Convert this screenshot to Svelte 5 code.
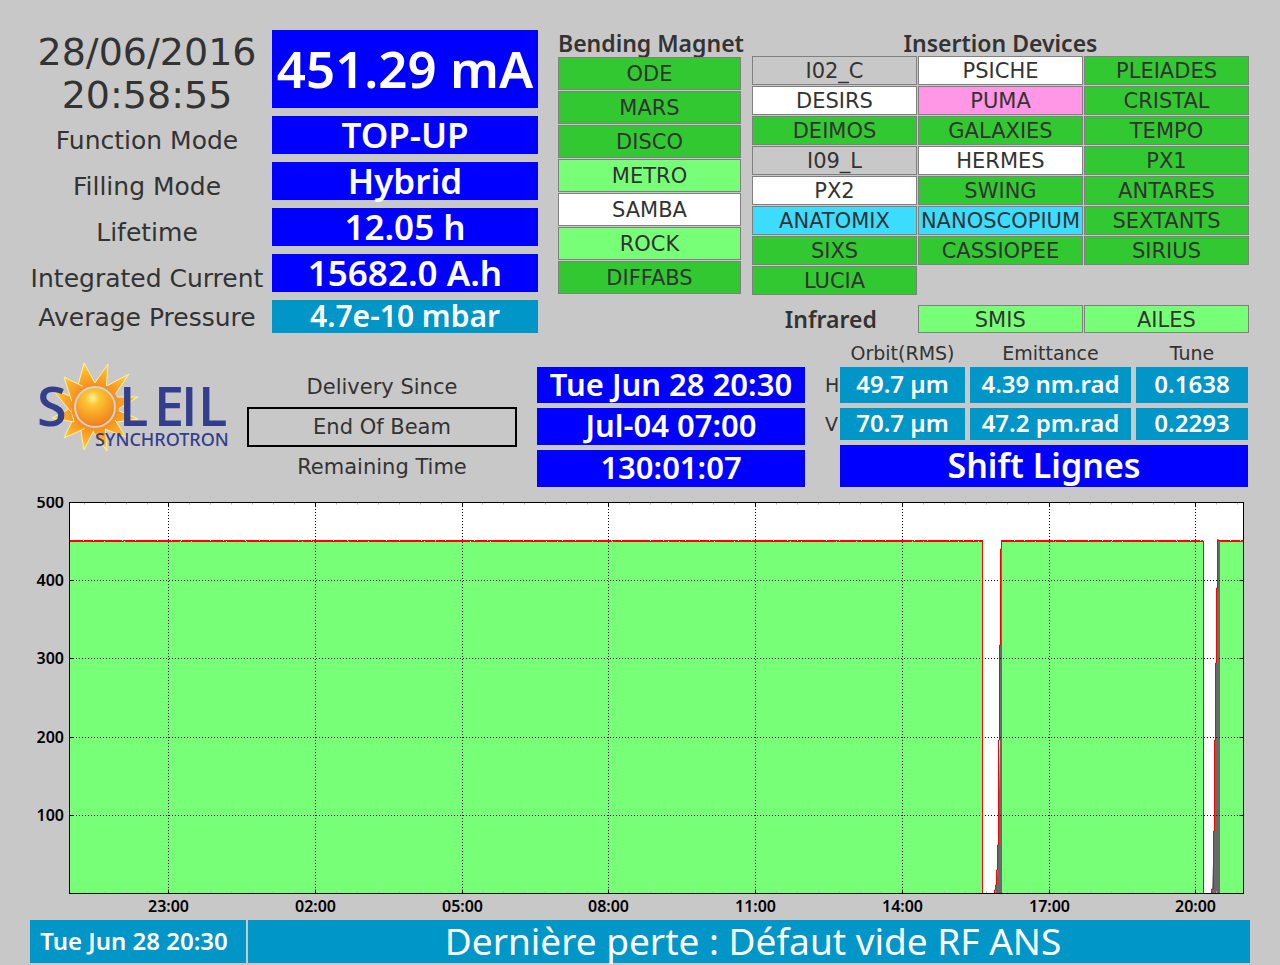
<!--
  Machine status board for the storage ring
  Beam values, beamline front-end states, orbit figures and the 24 h current trend
-->
<script lang="ts">
  type State = 'open' | 'ready' | 'closed' | 'off' | 'busy' | 'test';

  interface Beamline {
    name: string;
    state: State;
  }

  const machine = [
    { label: 'Function Mode', value: 'TOP-UP' },
    { label: 'Filling Mode', value: 'Hybrid' },
    { label: 'Lifetime', value: '12.05 h' },
    { label: 'Integrated Current', value: '15682.0 A.h' }
  ];

  const bending: Beamline[] = [
    { name: 'ODE', state: 'open' },
    { name: 'MARS', state: 'open' },
    { name: 'DISCO', state: 'open' },
    { name: 'METRO', state: 'ready' },
    { name: 'SAMBA', state: 'closed' },
    { name: 'ROCK', state: 'ready' },
    { name: 'DIFFABS', state: 'open' }
  ];

  // Row by row, three per row
  const insertion: Beamline[] = [
    { name: 'I02_C', state: 'off' },
    { name: 'PSICHE', state: 'closed' },
    { name: 'PLEIADES', state: 'open' },
    { name: 'DESIRS', state: 'closed' },
    { name: 'PUMA', state: 'test' },
    { name: 'CRISTAL', state: 'open' },
    { name: 'DEIMOS', state: 'open' },
    { name: 'GALAXIES', state: 'open' },
    { name: 'TEMPO', state: 'open' },
    { name: 'I09_L', state: 'off' },
    { name: 'HERMES', state: 'closed' },
    { name: 'PX1', state: 'open' },
    { name: 'PX2', state: 'closed' },
    { name: 'SWING', state: 'open' },
    { name: 'ANTARES', state: 'open' },
    { name: 'ANATOMIX', state: 'busy' },
    { name: 'NANOSCOPIUM', state: 'busy' },
    { name: 'SEXTANTS', state: 'open' },
    { name: 'SIXS', state: 'open' },
    { name: 'CASSIOPEE', state: 'open' },
    { name: 'SIRIUS', state: 'open' },
    { name: 'LUCIA', state: 'open' }
  ];

  const infrared: Beamline[] = [
    { name: 'SMIS', state: 'ready' },
    { name: 'AILES', state: 'ready' }
  ];

  const orbit = [
    { axis: 'H', values: ['49.7 µm', '4.39 nm.rad', '0.1638'] },
    { axis: 'V', values: ['70.7 µm', '47.2 pm.rad', '0.2293'] }
  ];

  // Chart geometry, in viewBox units
  const left = 39.5;
  const right = 1213.5;
  const top = 5.5;
  const bottom = 396.5;
  const hourStep = 146.75;
  const firstHour = 138.5;

  const yTicks = [500, 400, 300, 200, 100].map((value) => ({
    value,
    y: Math.floor(bottom - (value * (bottom - top)) / 500) + 0.5
  }));

  const xTicks = ['23:00', '02:00', '05:00', '08:00', '11:00', '14:00', '17:00', '20:00'].map(
    (label, i) => ({ label, x: Math.floor(firstHour + i * hourStep) + 0.5 })
  );

  const minorTicks = Array.from({ length: 56 }, (_, i) =>
    Math.floor(firstHour + (i - 4) * (hourStep / 7)) + 0.5
  ).filter((x) => x > left && x < right && !xTicks.some((t) => Math.abs(t.x - x) < 3));

  const rays = [
    'M54 12L47 38L66 34Z',
    'M78 13L62 36L76 40Z',
    'M99 23L73 37L82 48Z',
    'M108 46L80 46L85 60Z',
    'M108 68L85 58L80 72Z',
    'M96 86L83 66L72 77Z',
    'M77 100L75 74L61 78Z',
    'M54 99L65 77L50 74Z',
    'M34 87L56 77L44 66Z',
    'M22 67L44 71L41 57Z',
    'M22 38L41 61L45 47Z',
    'M34 26L42 51L56 37Z'
  ];
</script>

{#snippet tile(line: Beamline)}
  <li class="tile {line.state}">{line.name}</li>
{/snippet}

<main class="board">
  <section class="top">
    <dl class="machine">
      <dt class="clock"><time datetime="2016-06-28T20:58:55">28/06/2016<br />20:58:55</time></dt>
      <dd class="value current">451.29 mA</dd>
      {#each machine as item}
        <dt>{item.label}</dt>
        <dd class="value">{item.value}</dd>
      {/each}
      <dt class="low">Average Pressure</dt>
      <dd class="value teal pressure">4.7e-10 mbar</dd>
    </dl>

    <div class="bending">
      <h2>Bending Magnet</h2>
      <ul class="tall">
        {#each bending as line}
          {@render tile(line)}
        {/each}
      </ul>
    </div>

    <div class="insertion">
      <h2>Insertion Devices</h2>
      <ul class="three">
        {#each insertion as line}
          {@render tile(line)}
        {/each}
      </ul>
      <div class="infrared">
        <h2>Infrared</h2>
        <ul class="two">
          {#each infrared as line}
            {@render tile(line)}
          {/each}
        </ul>
      </div>
    </div>
  </section>

  <section class="middle">
    <svg class="logo" viewBox="0 0 207 110" role="img" aria-label="SOLEIL Synchrotron">
      <defs>
        <radialGradient id="disc" cx="0.44" cy="0.28" r="0.7">
          <stop offset="0" stop-color="#fff3a0" />
          <stop offset="0.25" stop-color="#fdc534" />
          <stop offset="0.7" stop-color="#f69a22" />
          <stop offset="1" stop-color="#ef7f22" />
        </radialGradient>
        <radialGradient id="ray" gradientUnits="userSpaceOnUse" cx="65" cy="56" r="48">
          <stop offset="0.4" stop-color="#f58a1f" />
          <stop offset="0.75" stop-color="#fbb52a" />
          <stop offset="1" stop-color="#fde56a" />
        </radialGradient>
      </defs>
      <g class="rays">
        {#each rays as d}
          <path {d} />
        {/each}
        <circle class="core" cx="65" cy="56" r="24" />
      </g>
      <circle class="disc" cx="65" cy="56" r="20" />
      <g class="letters">
        <text x="7" y="75">S</text>
        <text x="89" y="75">L</text>
        <text x="124" y="75">E</text>
        <text x="151" y="75">I</text>
        <text x="168" y="75">L</text>
      </g>
      <text class="name" x="65" y="95">SYNCHROTRON</text>
    </svg>

    <div class="delivery-labels">
      <span>Delivery Since</span>
      <button type="button">End Of Beam</button>
      <span>Remaining Time</span>
    </div>

    <div class="delivery">
      <div class="value">Tue Jun 28 20:30</div>
      <div class="value">Jul-04 07:00</div>
      <div class="value">130:01:07</div>
    </div>

    <div class="orbit">
      <table>
        <thead>
          <tr>
            <td></td>
            <th scope="col">Orbit(RMS)</th>
            <th scope="col">Emittance</th>
            <th scope="col">Tune</th>
          </tr>
        </thead>
        <tbody>
          {#each orbit as row}
            <tr>
              <th scope="row">{row.axis}</th>
              {#each row.values as value}
                <td class="value teal">{value}</td>
              {/each}
            </tr>
          {/each}
        </tbody>
      </table>
      <div class="value shift">Shift Lignes</div>
    </div>
  </section>

  <svg class="chart" viewBox="0 0 1220 423" role="img" aria-label="Stored current over the last 24 hours">
    <rect class="plot" x={left} y={top} width={right - left} height={bottom - top} />

    <!-- Stored beam -->
    <path class="beam" d="M40 44H952V396H40ZM971 44H1173V396H971ZM1189 44H1213V396H1189Z" />
    <!-- Refill ramps -->
    <path class="ramp" d="M965 396L967 380L968 348L970 244V148L971 52H972V396Z" />
    <path class="ramp" d="M1182 396L1184 334L1185 244L1186 164L1187 91V43H1190V396Z" />

    <!-- Grid -->
    {#each yTicks as tick}
      {#if tick.value < 500}
        <path class="grid" d="M{left + 0.5} {tick.y}H{right}" />
      {/if}
      <path class="major" d="M{left} {tick.y}h4M{right} {tick.y}h-4" />
      <text class="axis" x="34" y={tick.y + 5} text-anchor="end">{tick.value}</text>
    {/each}
    {#each minorTicks as x}
      <path class="minor" d="M{x} {top}v2M{x} {bottom}v-2" />
    {/each}
    {#each xTicks as tick}
      <path class="grid" d="M{tick.x} {top + 0.5}V{bottom}" />
      <path class="major" d="M{tick.x} {top}v4M{tick.x} {bottom}v-4" />
      <text class="axis" x={tick.x} y="415" text-anchor="middle">{tick.label}</text>
    {/each}

    <!-- Current trace -->
    <path class="trace high" d="M40 43.5H953M971 43.5H1173M1187 43.5H1213" />
    <path class="trace low" d="M40 44.5H953M971 44.5H1174M1190 44.5H1213" />
    <path
      class="trace"
      d="M952.5 44V396M964.5 396V393H965.5V388H966.5V373H967.5V348H968.5V243H969.5V148H970.5V52H971.5V44M1173.5 44V396M1181.5 396V392H1183.5V334H1184.5V243H1185.5V166H1186.5V91H1187.5V42.5H1188.5"
    />
    <rect class="frame" x={left} y={top} width={right - left} height={bottom - top} />
  </svg>

  <footer>
    <time class="value teal" datetime="2016-06-28T20:30">Tue Jun 28 20:30</time>
    <p class="value teal">Dernière perte : Défaut vide RF ANS</p>
  </footer>
</main>

<style>
  :global(body) {
    margin: 0;
    background: #c8c8c8;
  }

  .board {
    padding: 30px 30px 2px;
    color: #333333;
    font-family: 'DejaVu Sans', 'Lucida Sans', sans-serif;
  }

  dl,
  dd,
  ul,
  h2,
  p {
    margin: 0;
    padding: 0;
  }

  .value {
    display: flex;
    align-items: center;
    justify-content: center;
    box-sizing: border-box;
    padding-bottom: 2px;
    background: #0000ff;
    color: #ffffff;
    font-family: 'Noto Sans', 'Lucida Sans', sans-serif;
    font-weight: 600;
    line-height: 1;
    white-space: nowrap;
  }

  .teal {
    background: #0096c8;
  }

  /* Top: machine values and beamlines */
  .top {
    display: grid;
    grid-template-columns: minmax(0, 508fr) minmax(0, 183fr) minmax(0, 489fr);
    column-gap: 20px;
  }

  .machine {
    display: grid;
    grid-template-columns: minmax(0, 234fr) minmax(0, 266fr);
    grid-template-rows: 78px repeat(4, 38px) 33px;
    gap: 8px;
    font-size: 25px;
  }

  .machine dt {
    display: flex;
    align-items: center;
    justify-content: center;
    padding-top: 10px;
    text-align: center;
    white-space: nowrap;
  }

  .machine .low {
    padding-top: 2px;
  }

  .machine .clock {
    font-size: 38px;
    line-height: 43px;
  }

  .machine .value {
    font-size: 35px;
  }

  .machine .current {
    font-size: 51px;
  }

  .machine .pressure {
    font-size: 30px;
  }

  h2 {
    font-family: 'Noto Sans', 'Lucida Sans', sans-serif;
    font-size: 23px;
    font-weight: 600;
    line-height: 26px;
    text-align: center;
    white-space: nowrap;
  }

  ul {
    display: grid;
    gap: 1px;
    list-style: none;
  }

  .tile {
    box-sizing: border-box;
    border: 1px solid #808080;
    padding-top: 2px;
    font-size: 21px;
    line-height: 25px;
    text-align: center;
    white-space: nowrap;
  }

  .tall {
    margin-top: 1px;
  }

  .tall .tile {
    line-height: 29px;
  }

  .insertion {
    margin-left: -9px;
    padding-right: 1px;
  }

  .three {
    grid-template-columns: repeat(3, minmax(0, 1fr));
  }

  .infrared {
    display: grid;
    grid-template-columns: minmax(0, 1fr) minmax(0, 2fr);
    align-items: center;
    margin-top: 10px;
  }

  .two {
    grid-template-columns: repeat(2, minmax(0, 1fr));
  }

  .two .tile {
    line-height: 24px;
  }

  .infrared h2 {
    padding-right: 8px;
  }

  .open {
    background: #32c832;
  }

  .ready {
    background: #78ff78;
  }

  .closed {
    background: #ffffff;
  }

  .busy {
    background: #3cdcff;
  }

  .test {
    background: #ff96e6;
  }

  /* Middle: logo, delivery, orbit */
  .middle {
    display: grid;
    grid-template-columns: minmax(0, 207fr) minmax(0, 260fr) minmax(0, 268fr) minmax(0, 423fr);
    column-gap: 20px;
    align-items: end;
    margin-top: 8px;
    padding-right: 2px;
  }

  .logo {
    align-self: start;
    width: 100%;
    margin-top: 10px;
  }

  .rays path,
  .core {
    fill: url(#ray);
    stroke: #fdf0a0;
    stroke-width: 1;
  }

  .core {
    stroke: none;
  }

  .disc {
    fill: url(#disc);
    stroke: #d2d2d2;
    stroke-width: 2;
  }

  .letters text {
    fill: #333f8c;
    font-family: 'Open Sans', sans-serif;
    font-size: 54px;
    font-weight: 600;
  }

  .name {
    fill: #333f8c;
    font-family: 'Noto Sans', sans-serif;
    font-size: 18px;
    font-weight: 500;
  }

  .delivery-labels {
    display: grid;
    grid-template-rows: 40px 40px 40px;
    margin-left: -10px;
    font-size: 21px;
    line-height: 40px;
    text-align: center;
  }

  .delivery-labels button {
    border: 2px solid #000000;
    padding: 0;
    background: transparent;
    color: inherit;
    font: inherit;
    line-height: 36px;
  }

  .delivery {
    display: grid;
    grid-template-rows: 36px 37px 37px;
    gap: 5px;
  }

  .delivery .value {
    font-size: 31px;
  }

  table {
    display: grid;
    grid-template-columns: 10px minmax(0, 125fr) minmax(0, 161fr) minmax(0, 112fr);
    grid-template-rows: 21px 36px 32px;
    gap: 5px;
  }

  thead,
  tbody,
  tr {
    display: contents;
  }

  th,
  td {
    padding: 0;
  }

  th {
    font-size: 19px;
    font-weight: 400;
    line-height: 24px;
  }

  th[scope='row'] {
    align-self: center;
    text-align: left;
  }

  td.value {
    padding-bottom: 2px;
    font-size: 24px;
  }

  .shift {
    height: 42px;
    margin: 5px 0 0 15px;
    font-size: 34px;
  }

  /* Current trend */
  .chart {
    display: block;
    width: 100%;
    margin-top: 10px;
  }

  .plot {
    fill: #ffffff;
  }

  .beam {
    fill: #78ff78;
  }

  .ramp {
    fill: #696969;
  }

  .frame,
  .grid,
  .major {
    fill: none;
    stroke: #000000;
  }

  .grid {
    stroke-dasharray: 1 2;
  }

  .minor {
    stroke: #b4b4b4;
  }

  .trace {
    fill: none;
    stroke: #ff0000;
  }

  .high {
    stroke-dasharray: 13 1 9 1 28 1 12 1 21 1;
  }

  .low {
    stroke-dasharray: 34 1 19 1 55 1 10 1;
  }

  .axis {
    fill: #000000;
    font-family: 'Noto Sans', 'Lucida Sans', sans-serif;
    font-size: 16px;
    font-weight: 600;
  }

  /* Last event */
  footer {
    display: grid;
    grid-template-columns: minmax(0, 216fr) minmax(0, 1002fr);
    grid-template-rows: 43px;
    gap: 2px;
  }

  footer time {
    padding-right: 8px;
    font-size: 24px;
  }

  footer p.value {
    padding: 0 0 2px 8px;
    font-size: 37px;
    font-weight: 400;
  }
</style>
